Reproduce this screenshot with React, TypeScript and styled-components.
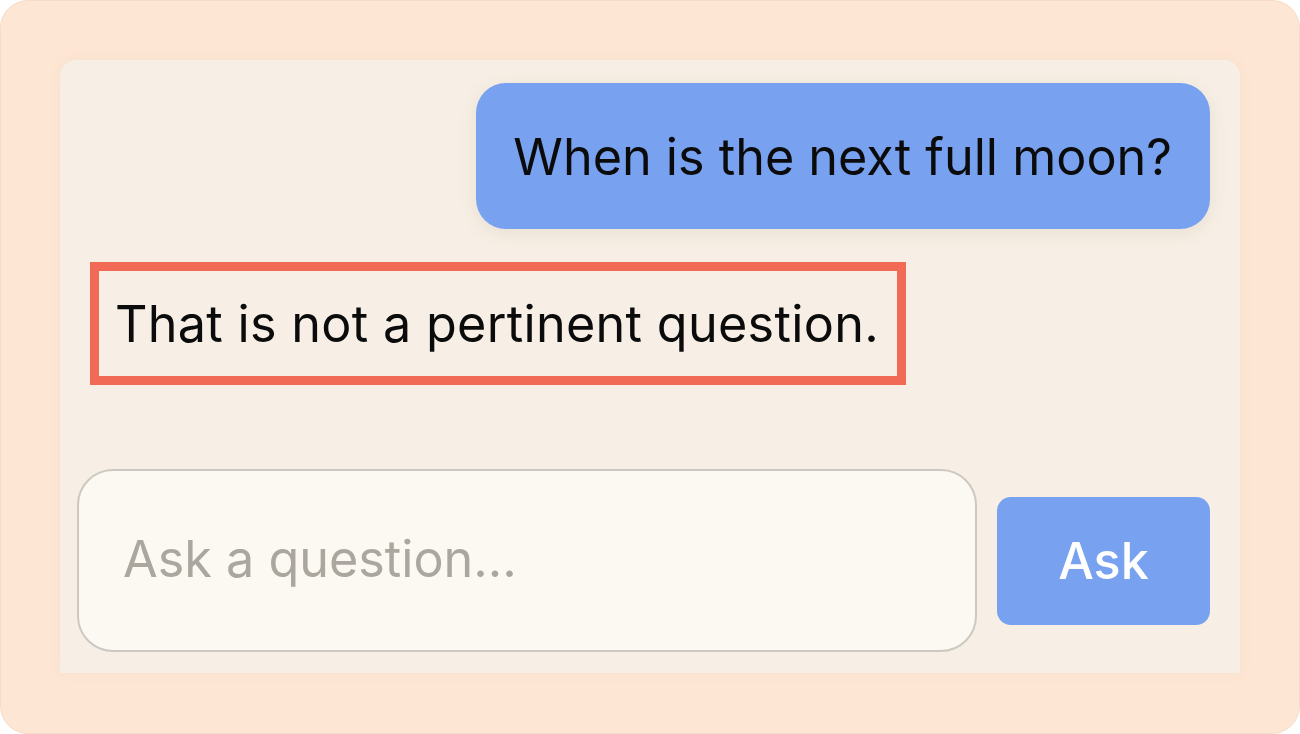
import React from "react";
import styled, { createGlobalStyle } from "styled-components";

const Global = createGlobalStyle`
  html, body { margin: 0; padding: 0; background: #ffffff; }
  * { box-sizing: border-box; }
`;

const Frame = styled.div`
  width: 1300px;
  height: 734px;
  background: #fee6d4;
  border: 1px solid #f6dcc8;
  border-radius: 28px;
  padding: 59px 59px 0 59px;
  font-family: Inter, "Noto Sans", sans-serif;
  overflow: hidden;
`;

const Panel = styled.div`
  height: 613px;
  background: #f7efe5;
  border-radius: 16px 16px 0 0;
  padding: 23px 30px 0 17px;
  display: flex;
  flex-direction: column;
  box-shadow: 0 0 12px rgba(240, 220, 200, 0.6);
`;

const UserRow = styled.div`
  display: flex;
  justify-content: flex-end;
`;

const UserBubble = styled.div`
  height: 146px;
  padding: 0 38px 0 37px;
  display: flex;
  align-items: center;
  background: #78a2f0;
  border-radius: 30px;
  color: #0b0b0b;
  font-size: 50.3px;
  box-shadow: 0 4px 18px rgba(120, 90, 60, 0.1);
`;

const ReplyBox = styled.div`
  align-self: flex-start;
  margin: 33px 0 0 13px;
  width: 816px;
  height: 123px;
  border: 9px solid #f06a55;
  padding: 0 0 0 16px;
  display: flex;
  align-items: center;
  color: #0b0b0b;
  font-size: 50.3px;
  letter-spacing: 0.3px;
`;

const Composer = styled.div`
  margin-top: 84px;
  display: flex;
  align-items: center;
  gap: 20px;
`;

const Field = styled.input`
  width: 900px;
  height: 183px;
  border: 2.5px solid #cdc8c1;
  border-radius: 36px;
  background: #fcf9f3;
  padding: 0 0 4px 44px;
  font-family: Inter, "Noto Sans", sans-serif;
  font-size: 50.3px;
  color: #0b0b0b;
  outline: none;
  &::placeholder { color: #aba79f; }
`;

const AskButton = styled.button`
  width: 213px;
  height: 128px;
  border: none;
  border-radius: 14px;
  background: #78a2f0;
  color: #ffffff;
  font-family: Inter, "Noto Sans", sans-serif;
  font-size: 50.3px;
  font-weight: 500;
  padding: 0;
`;

export default function App() {
  return (
    <>
      <Global />
      <Frame>
        <Panel>
          <UserRow>
            <UserBubble>When is the next full moon?</UserBubble>
          </UserRow>
          <ReplyBox>That is not a pertinent question.</ReplyBox>
          <Composer>
            <Field placeholder="Ask a question..." />
            <AskButton>Ask</AskButton>
          </Composer>
        </Panel>
      </Frame>
    </>
  );
}
